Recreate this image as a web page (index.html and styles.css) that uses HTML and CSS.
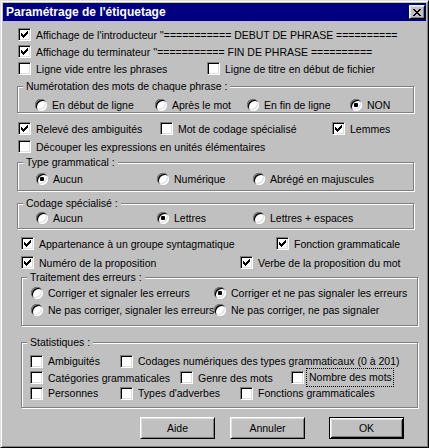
FILE: index.html
```html
<!DOCTYPE html>
<html lang="fr">
<head>
    <meta charset="UTF-8">
    <title>Paramétrage de l'étiquetage</title>
    <link rel="stylesheet" href="styles.css">
</head>
<body>
    <svg class="defs" width="0" height="0">
        <symbol id="check" viewBox="0 0 7 7">
            <path d="M0 2h1v3h-1z M1 3h1v3h-1z M2 4h1v3h-1z M3 3h1v3h-1z M4 2h1v3h-1z M5 1h1v3h-1z M6 0h1v3h-1z" fill="#000"/>
        </symbol>
    </svg>

    <div class="window">
        <div class="titlebar">
            <span class="title">Paramétrage de l'étiquetage</span>
            <button class="close">
                <svg width="8" height="7" viewBox="0 0 8 7" shape-rendering="crispEdges">
                    <path d="M0 0h2v1h-2z M6 0h2v1h-2z M1 1h2v1h-2z M5 1h2v1h-2z M2 2h4v1h-4z M3 3h2v1h-2z M2 4h4v1h-4z M1 5h2v1h-2z M5 5h2v1h-2z M0 6h2v1h-2z M6 6h2v1h-2z" fill="#000"/>
                </svg>
            </button>
        </div>

        <div class="content">
            <div class="line first">
                <label class="item"><span class="box"><svg shape-rendering="crispEdges"><use href="#check"/></svg></span>Affichage de l'introducteur ''=========== DEBUT DE PHRASE ==========</label>
            </div>
            <div class="line">
                <label class="item"><span class="box"><svg shape-rendering="crispEdges"><use href="#check"/></svg></span>Affichage du terminateur ''=========== FIN DE PHRASE ==========</label>
            </div>
            <div class="line cols-titre">
                <label class="item"><span class="box"></span>Ligne vide entre les phrases</label>
                <label class="item"><span class="box"></span>Ligne de titre en début de fichier</label>
            </div>

            <div class="group numerotation">
                <span class="legend">Numérotation des mots de chaque phrase :</span>
                <div class="opts">
                    <label class="item"><span class="dot"></span>En début de ligne</label>
                    <label class="item"><span class="dot"></span>Après le mot</label>
                    <label class="item"><span class="dot"></span>En fin de ligne</label>
                    <label class="item"><span class="dot on"></span>NON</label>
                </div>
            </div>

            <div class="line cols-releve">
                <label class="item"><span class="box"><svg shape-rendering="crispEdges"><use href="#check"/></svg></span>Relevé des ambiguités</label>
                <label class="item"><span class="box"></span>Mot de codage spécialisé</label>
                <label class="item"><span class="box"><svg shape-rendering="crispEdges"><use href="#check"/></svg></span>Lemmes</label>
            </div>
            <div class="line decouper">
                <label class="item"><span class="box"></span>Découper les expressions en unités élémentaires</label>
            </div>

            <div class="group type-gram">
                <span class="legend">Type grammatical :</span>
                <div class="opts">
                    <label class="item"><span class="dot on"></span>Aucun</label>
                    <label class="item"><span class="dot"></span>Numérique</label>
                    <label class="item"><span class="dot"></span>Abrégé en majuscules</label>
                </div>
            </div>

            <div class="group codage">
                <span class="legend">Codage spécialisé :</span>
                <div class="opts">
                    <label class="item"><span class="dot"></span>Aucun</label>
                    <label class="item"><span class="dot on"></span>Lettres</label>
                    <label class="item"><span class="dot"></span>Lettres + espaces</label>
                </div>
            </div>

            <div class="line cols-appart">
                <label class="item"><span class="box"><svg shape-rendering="crispEdges"><use href="#check"/></svg></span>Appartenance à un groupe syntagmatique</label>
                <label class="item"><span class="box"><svg shape-rendering="crispEdges"><use href="#check"/></svg></span>Fonction grammaticale</label>
            </div>
            <div class="line cols-numero">
                <label class="item"><span class="box"><svg shape-rendering="crispEdges"><use href="#check"/></svg></span>Numéro de la proposition</label>
                <label class="item"><span class="box"><svg shape-rendering="crispEdges"><use href="#check"/></svg></span>Verbe de la proposition du mot</label>
            </div>

            <div class="group erreurs">
                <span class="legend">Traitement des erreurs :</span>
                <div class="opts">
                    <label class="item"><span class="dot"></span>Corriger et signaler les erreurs</label>
                    <label class="item"><span class="dot on"></span>Corriger et ne pas signaler les erreurs</label>
                    <label class="item"><span class="dot"></span>Ne pas corriger, signaler les erreurs</label>
                    <label class="item"><span class="dot"></span>Ne pas corriger, ne pas signaler</label>
                </div>
            </div>

            <div class="group stats">
                <span class="legend">Statistiques :</span>
                <div class="stat-row row-a">
                    <label class="item"><span class="box"></span>Ambiguités</label>
                    <label class="item"><span class="box"></span>Codages numériques des types grammaticaux (0 à 201)</label>
                </div>
                <div class="stat-row row-b">
                    <label class="item"><span class="box"></span>Catégories grammaticales</label>
                    <label class="item"><span class="box"></span>Genre des mots</label>
                    <label class="item focused"><span class="box"></span><span class="focus">Nombre des mots</span></label>
                </div>
                <div class="stat-row row-c">
                    <label class="item"><span class="box"></span>Personnes</label>
                    <label class="item"><span class="box"></span>Types d'adverbes</label>
                    <label class="item"><span class="box"></span>Fonctions grammaticales</label>
                </div>
            </div>

            <div class="buttons">
                <button class="btn">Aide</button>
                <button class="btn annuler">Annuler</button>
                <button class="btn default">OK</button>
            </div>
        </div>
    </div>
</body>
</html>
```

FILE: styles.css
```css
body {
    margin: 0;
    font-family: "Liberation Sans", Arial, sans-serif;
    font-size: 10.5px;
    color: #000;
    background: #c0c0c0;
}
.defs {
    display: block;
    width: 0;
    height: 0;
    overflow: hidden;
}

/* fenetre */
.window {
    width: 429px;
    height: 448px;
    box-sizing: border-box;
    padding: 2px;
    border: 1px solid;
    border-color: #dfdfdf #000 #000 #dfdfdf;
    box-shadow: inset 1px 1px #fff, inset -1px -1px #808080;
    background: #c0c0c0;
}
.titlebar {
    display: flex;
    align-items: center;
    height: 18px;
    background: #000080;
    color: #fff;
}
.title {
    flex: 1;
    padding-left: 3px;
    font-size: 12px;
    font-weight: bold;
}
.close {
    width: 16px;
    height: 14px;
    margin-right: 1px;
    padding: 0;
    display: flex;
    align-items: center;
    justify-content: center;
    background: #c0c0c0;
    border: 1px solid;
    border-color: #fff #000 #000 #fff;
    box-shadow: inset 1px 1px #dfdfdf, inset -1px -1px #808080;
}
.close svg { display: block; }

/* lignes et controles */
.line {
    display: flex;
    align-items: center;
    height: 17px;
    margin-left: 15px;
}
.line.first { margin-top: 5px; }
.item {
    display: flex;
    align-items: center;
    gap: 5px;
    white-space: nowrap;
}
.box {
    flex: none;
    width: 13px;
    height: 13px;
    box-sizing: border-box;
    padding: 2px;
    border: 1px solid;
    border-color: #808080 #fff #fff #808080;
    box-shadow: inset 1px 1px #000, inset -1px -1px #dfdfdf;
    background: #fff;
}
.box svg {
    display: block;
    width: 7px;
    height: 7px;
}
.dot {
    flex: none;
    width: 12px;
    height: 12px;
    border-radius: 50%;
    background: #fff;
    box-shadow: inset 1px 1px #808080, inset -1px -1px #fff, inset 2px 2px #000, inset -2px -2px #dfdfdf;
    display: flex;
    align-items: center;
    justify-content: center;
}
.dot.on::after {
    content: "";
    width: 4px;
    height: 4px;
    border-radius: 1px;
    background: #000;
}

.cols-titre { display: grid; grid-template-columns: 189px auto; }
.cols-releve { display: grid; grid-template-columns: 142px 172px auto; margin-top: 7px; }
.decouper { margin-top: 1px; }
.cols-appart { display: grid; grid-template-columns: 255px auto; margin: 6px 0 0 18px; }
.cols-numero { display: grid; grid-template-columns: 219px auto; margin: 2px 0 0 18px; }

/* cadres */
.group {
    position: relative;
    box-sizing: border-box;
    width: 397px;
    margin-left: 14px;
    border: 1px solid #808080;
    box-shadow: inset 1px 1px #fff, 1px 1px #fff;
}
.legend {
    position: absolute;
    top: -7px;
    left: 5px;
    padding: 0 3px;
    line-height: 13px;
    background: #c0c0c0;
}
.opts {
    display: grid;
    grid-auto-rows: 14px;
    align-items: center;
}
.numerotation { margin-top: 9px; height: 27px; }
.numerotation .opts {
    padding: 11px 0 0 17px;
    grid-template-columns: 120px 92px 103px auto;
}
.type-gram { margin-top: 7px; height: 29px; }
.type-gram .opts,
.codage .opts {
    padding: 9px 0 0 18px;
    grid-template-columns: 121px 96px auto;
}
.codage { margin-top: 12px; height: 26px; }
.codage .opts { padding-top: 7px; }

.erreurs { margin: 6px 0 0 18px; height: 49px; }
.erreurs .opts {
    padding: 8px 0 0 9px;
    grid-template-columns: 183px auto;
    row-gap: 3px;
}

.stats { margin: 16px 0 0 18px; height: 66px; padding: 10px 0 0 8px; }
.stat-row {
    display: grid;
    height: 16px;
    align-items: center;
}
.row-a { grid-template-columns: 90px auto; }
.row-b { grid-template-columns: 150px 111px auto; }
.row-c { grid-template-columns: 90px 120px auto; }
.item.focused { gap: 3px; }
.focus {
    padding: 2px 1px 2px 2px;
    line-height: 13px;
    outline: 1px dotted #000;
}

/* boutons */
.buttons {
    display: flex;
    margin: 9px 0 0 137px;
}
.btn {
    width: 75px;
    height: 22px;
    padding: 0;
    font: inherit;
    color: #000;
    background: #c0c0c0;
    border: 1px solid;
    border-color: #fff #000 #000 #fff;
    box-shadow: inset 1px 1px #dfdfdf, inset -1px -1px #808080;
}
.annuler { margin-left: 15px; }
.btn.default {
    margin-left: 24px;
    border-color: #000;
    box-shadow: inset 1px 1px #fff, inset -1px -1px #000, inset 2px 2px #dfdfdf, inset -2px -2px #808080;
}
```
